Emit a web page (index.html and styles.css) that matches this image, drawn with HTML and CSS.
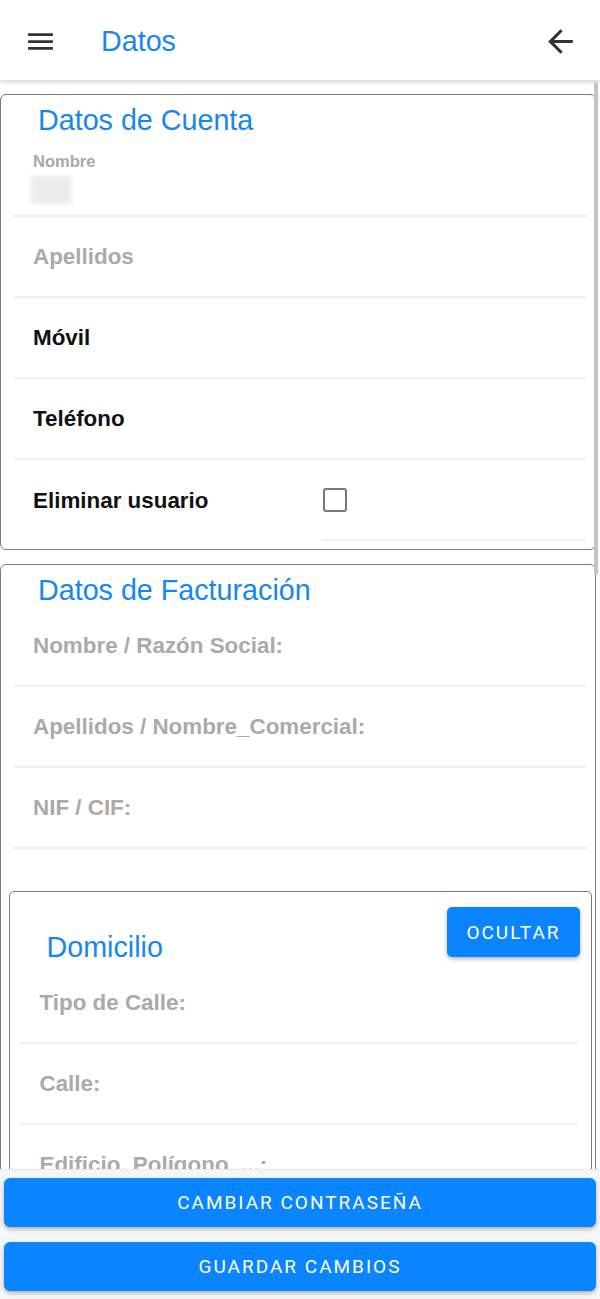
FILE: index.html
```html
<!DOCTYPE html>
<html lang="es">
<head>
    <meta charset="utf-8">
    <title>Datos</title>
    <link rel="stylesheet" href="styles.css">
</head>
<body>

    <header class="topbar">
        <button class="icon-btn menu-btn" aria-label="Menú">
            <svg viewBox="0 0 24 24" width="33" height="33"><path d="M3 18h18v-2H3v2zm0-5h18v-2H3v2zm0-7v2h18V6H3z"/></svg>
        </button>
        <div class="page-title">Datos</div>
        <button class="icon-btn back-btn" aria-label="Volver">
            <svg viewBox="0 0 24 24" width="37" height="37"><path d="M20 11H7.83l5.59-5.59L12 4l-8 8 8 8 1.41-1.41L7.83 13H20v-2z"/></svg>
        </button>
    </header>

    <main class="content">
        <!-- datos de cuenta -->
        <section class="card">
            <h2 class="card-title">Datos de Cuenta</h2>
            <div class="field field-stacked">
                <div class="field-label-small">Nombre</div>
                <div class="field-value-blur"></div>
            </div>
            <div class="field"><span class="label muted">Apellidos</span></div>
            <div class="field"><span class="label">Móvil</span></div>
            <div class="field"><span class="label">Teléfono</span></div>
            <div class="field-row">
                <span class="label row-label">Eliminar usuario</span>
                <div class="check-field"><span class="checkbox"></span></div>
            </div>
        </section>

        <!-- datos de facturacion -->
        <section class="card">
            <h2 class="card-title">Datos de Facturación</h2>
            <div class="field"><span class="label muted">Nombre / Razón Social:</span></div>
            <div class="field"><span class="label muted">Apellidos / Nombre_Comercial:</span></div>
            <div class="field"><span class="label muted">NIF / CIF:</span></div>

            <div class="sub-card">
                <div class="sub-head">
                    <h3 class="sub-title">Domicilio</h3>
                    <button class="btn btn-small">OCULTAR</button>
                </div>
                <div class="field"><span class="label muted">Tipo de Calle:</span></div>
                <div class="field"><span class="label muted">Calle:</span></div>
                <div class="field"><span class="label muted">Edificio, Polígono, ...:</span></div>
                <div class="field"><span class="label muted">Número:</span></div>
            </div>
        </section>
    </main>

    <footer class="actions">
        <button class="btn btn-wide">CAMBIAR CONTRASEÑA</button>
        <button class="btn btn-wide">GUARDAR CAMBIOS</button>
    </footer>

    <div class="scrollbar"></div>

</body>
</html>
```

FILE: styles.css
```css
/* base */
body {
    margin: 0;
    height: 1299px;
    display: flex;
    flex-direction: column;
    overflow: hidden;
    background: #fff;
    font-family: "Liberation Sans", Arial, sans-serif;
    position: relative;
}

/* barra superior */
.topbar {
    height: 80px;
    flex: 0 0 80px;
    display: flex;
    align-items: center;
    padding: 2px 21px 0 24px;
    box-sizing: border-box;
    background: #fff;
    box-shadow: 0 2px 5px rgba(0, 0, 0, 0.18);
    position: relative;
    z-index: 2;
}

.icon-btn {
    background: none;
    border: none;
    padding: 0;
    display: flex;
    cursor: pointer;
}

.icon-btn svg {
    fill: #333;
}

.menu-btn {
    margin-right: 44px;
}

.page-title {
    font-size: 28.7px;
    color: #1787ef;
    flex: 1;
}

/* contenido */
.content {
    flex: 1;
    overflow: hidden;
    padding-top: 14px;
}

.card {
    border: 1.5px solid #7a7a7a;
    border-radius: 6px;
    margin: 0 4px 14px 0;
    padding: 9px 0 8px;
}

.card-title {
    font-size: 28.7px;
    font-weight: 400;
    line-height: 32px;
    color: #1787ef;
    margin: 0 0 0 37px;
}

.field {
    margin: 0 9px 0 13px;
    height: 79px;
    border-bottom: 2px solid #efefef;
    display: flex;
    align-items: center;
    padding-left: 19px;
}

.field-stacked {
    flex-direction: column;
    align-items: flex-start;
    justify-content: flex-start;
    padding-top: 16px;
    height: 63px;
}

.field-label-small {
    font-size: 16.5px;
    line-height: 18px;
    font-weight: 700;
    color: #a8a8a8;
}

.field-value-blur {
    width: 40px;
    height: 28px;
    margin: 6px 0 0 -2px;
    background: #ececec;
    filter: blur(2px);
}

.label {
    font-size: 22.4px;
    font-weight: 700;
    color: #111;
}

.label.muted {
    color: #aaaaaa;
}

.field-row {
    display: flex;
    margin: 0 9px 0 13px;
}

.row-label {
    flex: 0 0 289px;
    padding-left: 19px;
    display: flex;
    align-items: center;
}

.check-field {
    flex: 1;
    height: 79px;
    border-bottom: 2px solid #efefef;
    display: flex;
    align-items: center;
    padding-left: 1px;
}

.checkbox {
    width: 20px;
    height: 20px;
    border: 2.5px solid #777;
    border-radius: 3px;
}

/* domicilio */
.sub-card {
    border: 1.5px solid #7a7a7a;
    border-radius: 5px;
    margin: 42px 3px 0 7.5px;
    padding-bottom: 20px;
}

.sub-head {
    display: flex;
    justify-content: space-between;
    align-items: flex-start;
    padding: 15px 11px 0 37px;
}

.sub-title {
    font-size: 28.7px;
    font-weight: 400;
    line-height: 32px;
    color: #1787ef;
    margin: 24px 0 0;
}

.sub-card .field {
    margin: 0 13px 0 10px;
    padding-left: 20px;
}

/* botones */
.btn {
    border: none;
    background: #0a84ff;
    color: #fff;
    font-family: Roboto, "Liberation Sans", sans-serif;
    font-size: 19px;
    letter-spacing: 2px;
    border-radius: 6px;
    box-shadow: 0 2px 4px rgba(0, 0, 0, 0.3);
    cursor: pointer;
}

.btn-small {
    width: 133px;
    height: 50px;
    border-radius: 5px;
}

.actions {
    flex: 0 0 130px;
    box-sizing: border-box;
    background: #f6f6f6;
    border-top: 1px solid #e6e6e6;
    padding: 8px 4px 8px;
    display: flex;
    flex-direction: column;
    gap: 15px;
}

.btn-wide {
    height: 49px;
    width: 100%;
}

.scrollbar {
    position: absolute;
    top: 82px;
    right: 2px;
    width: 4px;
    height: 493px;
    background: #c4c4c4;
    border-radius: 2px;
    z-index: 3;
}
```
